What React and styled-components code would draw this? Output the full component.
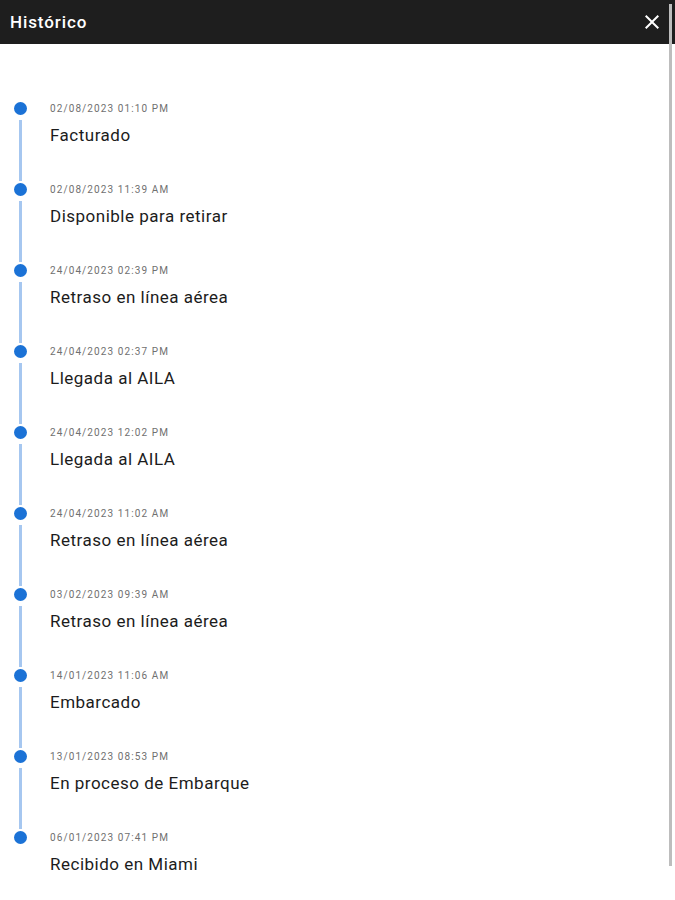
import React from 'react';
import styled, { createGlobalStyle } from 'styled-components';

const GlobalStyle = createGlobalStyle`
  html, body {
    margin: 0;
    padding: 0;
    background: #ffffff;
  }
  body {
    font-family: Roboto, "Liberation Sans", Arial, sans-serif;
  }
`;

const Dialog = styled.div`
  position: relative;
  width: 675px;
  height: 900px;
  background: #ffffff;
  overflow: hidden;
`;

const Header = styled.div`
  display: flex;
  align-items: center;
  justify-content: space-between;
  height: 44px;
  padding: 0 11px 0 10px;
  background: #1e1e1e;
  box-sizing: border-box;
`;

const Title = styled.h2`
  margin: 0;
  font-size: 17px;
  font-weight: 500;
  color: #ffffff;
  letter-spacing: 0.9px;
`;

const CloseButton = styled.button`
  display: flex;
  align-items: center;
  justify-content: center;
  width: 24px;
  height: 24px;
  padding: 0;
  border: none;
  background: transparent;
  cursor: pointer;
`;

const ScrollThumb = styled.div`
  position: absolute;
  top: 4px;
  left: 669px;
  width: 3px;
  height: 862px;
  background: #bdbdbd;
`;

const Timeline = styled.ul`
  list-style: none;
  margin: 0;
  padding: 58px 0 0 0;
`;

const Item = styled.li`
  display: flex;
  height: 81px;
`;

const Rail = styled.div`
  display: flex;
  flex-direction: column;
  align-items: center;
  width: 41px;
`;

const Dot = styled.span`
  width: 13px;
  height: 13px;
  border-radius: 50%;
  background: #1b72d6;
  flex-shrink: 0;
`;

const Connector = styled.span`
  flex: 1;
  width: 3px;
  margin: 5px 0 2px;
  background: ${p => (p.$hidden ? 'transparent' : '#a6c7f0')};
`;

const Content = styled.div`
  padding-left: 9px;
`;

const Stamp = styled.div`
  font-size: 10px;
  line-height: 13px;
  letter-spacing: 1.1px;
  color: #707070;
`;

const Label = styled.div`
  margin-top: 9px;
  font-size: 17px;
  line-height: 22px;
  color: #1c1c1c;
  letter-spacing: 0.5px;
`;

const events = [
  { date: '02/08/2023 01:10 PM', label: 'Facturado' },
  { date: '02/08/2023 11:39 AM', label: 'Disponible para retirar' },
  { date: '24/04/2023 02:39 PM', label: 'Retraso en línea aérea' },
  { date: '24/04/2023 02:37 PM', label: 'Llegada al AILA' },
  { date: '24/04/2023 12:02 PM', label: 'Llegada al AILA' },
  { date: '24/04/2023 11:02 AM', label: 'Retraso en línea aérea' },
  { date: '03/02/2023 09:39 AM', label: 'Retraso en línea aérea' },
  { date: '14/01/2023 11:06 AM', label: 'Embarcado' },
  { date: '13/01/2023 08:53 PM', label: 'En proceso de Embarque' },
  { date: '06/01/2023 07:41 PM', label: 'Recibido en Miami' },
];

function CloseIcon() {
  return (
    <svg width="24" height="24" viewBox="0 0 24 24" fill="#ffffff">
      <path d="M19 6.41 17.59 5 12 10.59 6.41 5 5 6.41 10.59 12 5 17.59 6.41 19 12 13.41 17.59 19 19 17.59 13.41 12z" />
    </svg>
  );
}

export default function App() {
  return (
    <Dialog>
      <GlobalStyle />
      <Header>
        <Title>Histórico</Title>
        <CloseButton aria-label="Cerrar">
          <CloseIcon />
        </CloseButton>
      </Header>
      <Timeline>
        {events.map((ev, i) => (
          <Item key={i}>
            <Rail>
              <Dot />
              <Connector $hidden={i === events.length - 1} />
            </Rail>
            <Content>
              <Stamp>{ev.date}</Stamp>
              <Label>{ev.label}</Label>
            </Content>
          </Item>
        ))}
      </Timeline>
      <ScrollThumb />
    </Dialog>
  );
}
